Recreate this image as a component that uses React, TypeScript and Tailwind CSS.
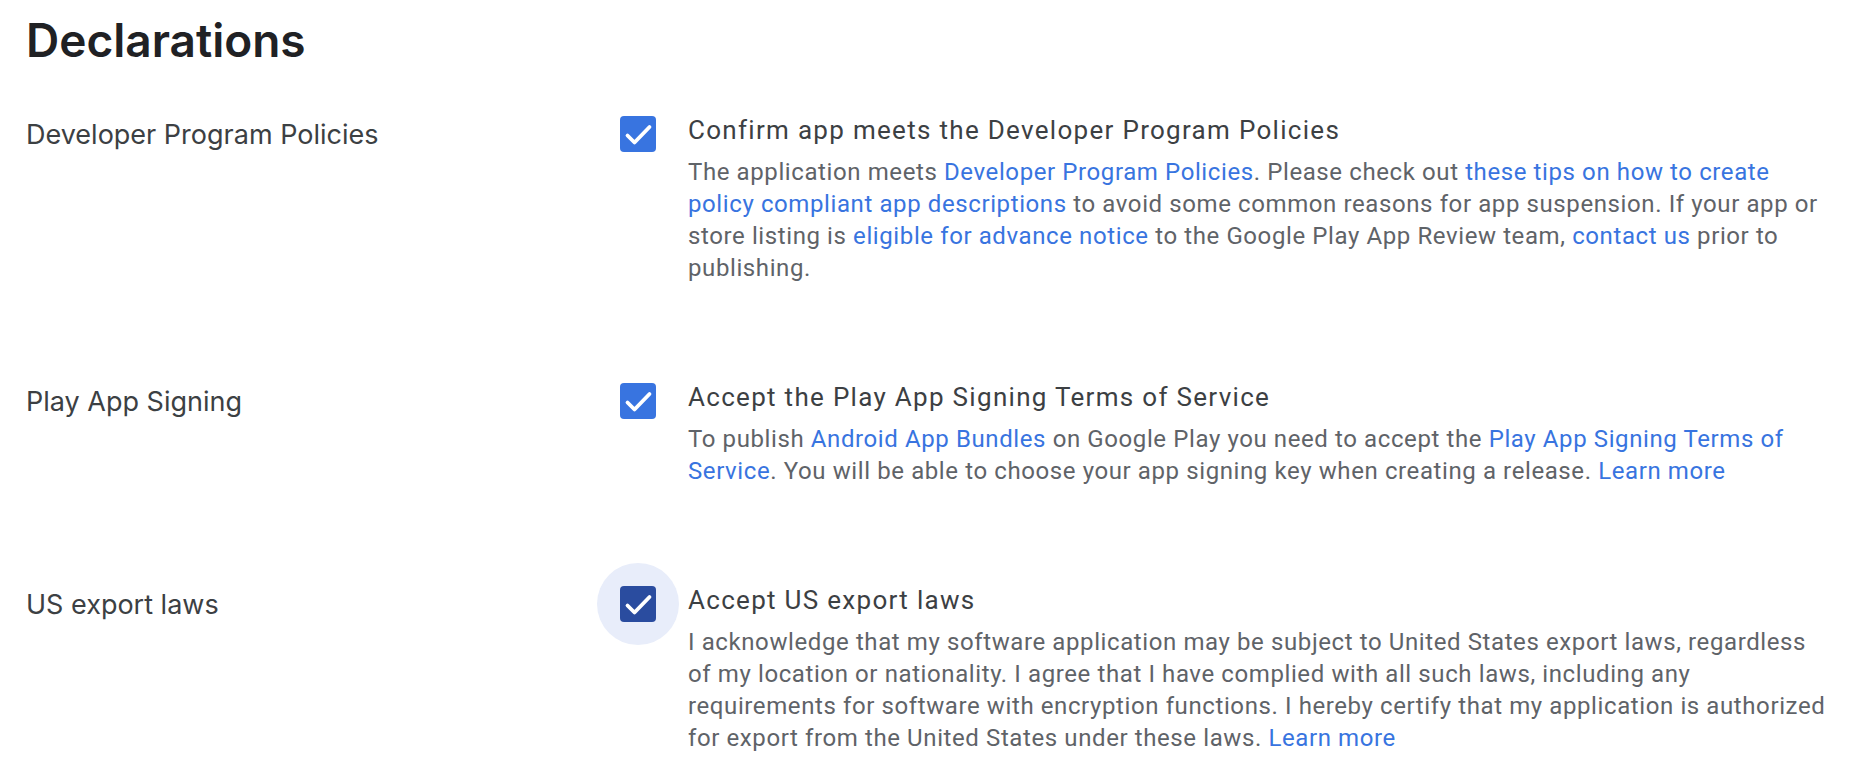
import type { ReactNode } from "react"

function Check({ focused = false }: { focused?: boolean }) {
  return (
    <div className="relative h-[36px] w-[36px] shrink-0 mt-[2px]">
      {focused && (
        <div className="absolute left-[-23px] top-[-23px] h-[82px] w-[82px] rounded-full bg-[#e8edfa]" />
      )}
      <div
        className={`relative flex h-[36px] w-[36px] items-center justify-center rounded-[4px] ${
          focused ? "bg-[#2a4c9f]" : "bg-[#3874e0]"
        }`}
      >
        <svg viewBox="0 0 36 36" className="h-[36px] w-[36px]">
          <polyline
            points="7.5,19.5 14.5,26.5 29.5,11"
            fill="none"
            stroke="white"
            strokeWidth="3.8"
            strokeLinecap="round"
            strokeLinejoin="round"
          />
        </svg>
      </div>
    </div>
  )
}

function A({ children }: { children: ReactNode }) {
  return <a className="text-[#3874e0]">{children}</a>
}

function Row({
  label,
  title,
  focused,
  children,
}: {
  label: string
  title: string
  focused?: boolean
  children: ReactNode
}) {
  return (
    <div className="flex">
      <div className="w-[594px] shrink-0 pt-[5px] text-[27px] leading-[32px] text-[#3c4043] [font-family:Inter,sans-serif]">
        {label}
      </div>
      <Check focused={focused} />
      <div className="ml-[32px] w-[1140px] [font-family:Roboto,sans-serif]">
        <div className="text-[26px] leading-[32px] tracking-[1.3px] text-[#3c4043]">{title}</div>
        <p className="mt-[10px] text-[24px] leading-[32px] tracking-[0.6px] text-[#5f6368]">{children}</p>
      </div>
    </div>
  )
}

export default function App() {
  return (
    <main className="min-h-screen w-full bg-white pl-[26px] pt-[12px]">
      <h1 className="text-[46px] font-semibold leading-[56px] text-[#202124] [font-family:Inter,sans-serif]">
        Declarations
      </h1>

      <div className="mt-[46px] flex flex-col gap-[97px]">
        <Row label="Developer Program Policies" title="Confirm app meets the Developer Program Policies">
          The application meets <A>Developer Program Policies</A>. Please check out{" "}
          <A>these tips on how to create policy compliant app descriptions</A> to avoid some common reasons
          for app suspension. If your app or store listing is <A>eligible for advance notice</A> to the
          Google Play App Review team, <A>contact us</A> prior to publishing.
        </Row>

        <Row label="Play App Signing" title="Accept the Play App Signing Terms of Service">
          To publish <A>Android App Bundles</A> on Google Play you need to accept the{" "}
          <A>Play App Signing Terms of Service</A>. You will be able to choose your app signing key when
          creating a release. <A>Learn more</A>
        </Row>

        <Row label="US export laws" title="Accept US export laws" focused>
          I acknowledge that my software application may be subject to United States export laws, regardless
          of my location or nationality. I agree that I have complied with all such laws, including any
          requirements for software with encryption functions. I hereby certify that my application is
          authorized for export from the United States under these laws. <A>Learn more</A>
        </Row>
      </div>
    </main>
  )
}
